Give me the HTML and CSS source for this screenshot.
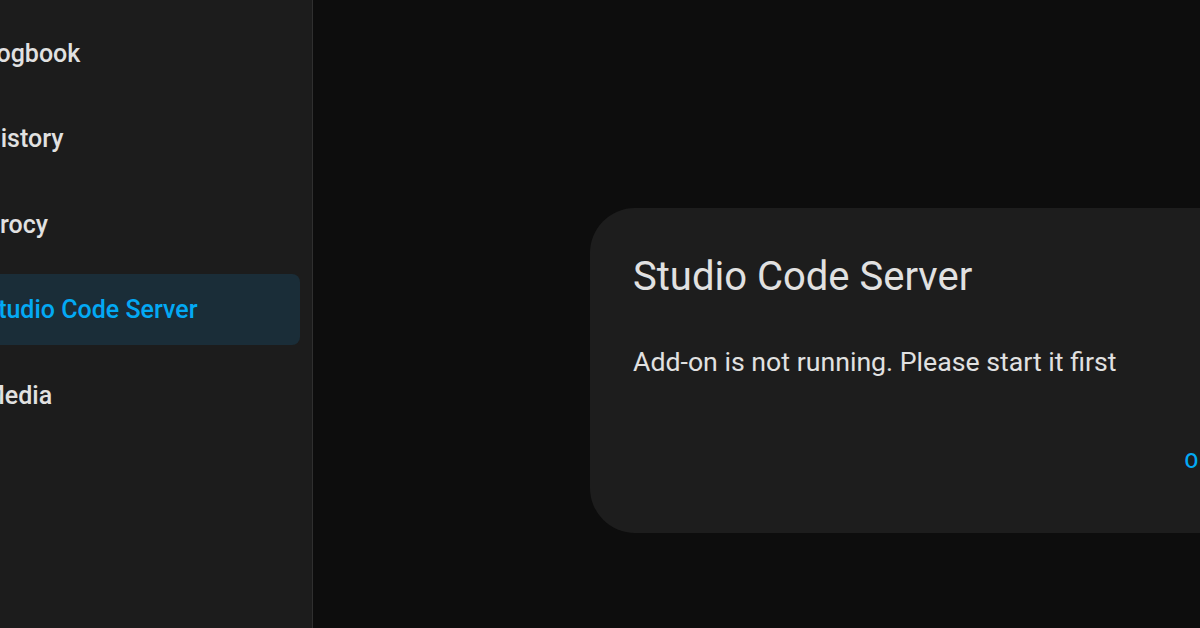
FILE: index.html
```html
<!DOCTYPE html>
<html>
<head>
<meta charset="utf-8">
<link rel="stylesheet" href="styles.css">
</head>
<body>
<div class="app">
  <nav class="sidebar">
    <ul class="nav-list">
      <li class="nav-item"><span class="label">Logbook</span></li>
      <li class="nav-item"><span class="label">History</span></li>
      <li class="nav-item"><span class="label">Grocy</span></li>
      <li class="nav-item selected"><span class="label">Studio Code Server</span></li>
      <li class="nav-item"><span class="label">Media</span></li>
    </ul>
  </nav>
  <main class="main">
    <section class="dialog">
      <h2 class="dialog-title">Studio Code Server</h2>
      <p class="dialog-body">Add-on is not running. Please start it first</p>
      <div class="dialog-actions"><button class="btn">OK</button></div>
    </section>
  </main>
</div>
</body>
</html>
```

FILE: styles.css
```css
* { box-sizing: border-box; }
html, body {
  margin: 0;
  padding: 0;
  width: 1200px;
  height: 628px;
  overflow: hidden;
  background: #0d0d0d;
  font-family: Roboto, "Noto Sans", sans-serif;
}
.app {
  display: flex;
  width: 1200px;
  height: 628px;
}
.sidebar {
  width: 313px;
  flex: none;
  background: #1c1c1c;
  border-right: 1px solid #2f2f2f;
  overflow: hidden;
}
.nav-list {
  list-style: none;
  margin: 0;
  padding: 17.5px 12px 0 0;
  display: flex;
  flex-direction: column;
  gap: 14.5px;
}
.nav-item {
  height: 71px;
  display: flex;
  align-items: center;
  border-radius: 8px;
  margin-left: -40px;
  padding-left: 23px;
}
.label {
  font-size: 25px;
  font-weight: 500;
  color: #e1e1e1;
  white-space: nowrap;
}
.nav-item.selected {
  background: #1a2d38;
}
.nav-item.selected .label {
  color: #03a9f4;
}
.main {
  flex: 1;
  overflow: hidden;
  padding: 208px 0 0 277px;
}
.dialog {
  width: 760px;
  height: 325px;
  background: #1d1d1d;
  border-radius: 45px;
  padding: 45px 0 0 43px;
  display: flex;
  flex-direction: column;
}
.dialog-title {
  margin: 0;
  font-size: 40px;
  font-weight: 400;
  line-height: 48px;
  color: #e1e1e1;
}
.dialog-body {
  margin: 43px 0 0 0;
  font-size: 26.7px;
  line-height: 36px;
  color: #e1e1e1;
}
.dialog-actions {
  display: flex;
  margin-top: 66.7px;
  padding-left: 551.5px;
}
.btn {
  background: none;
  border: none;
  padding: 0;
  font-family: Roboto, "Noto Sans", sans-serif;
  font-size: 20px;
  line-height: 28px;
  font-weight: 500;
  color: #03a9f4;
  letter-spacing: 1.5px;
}
```
